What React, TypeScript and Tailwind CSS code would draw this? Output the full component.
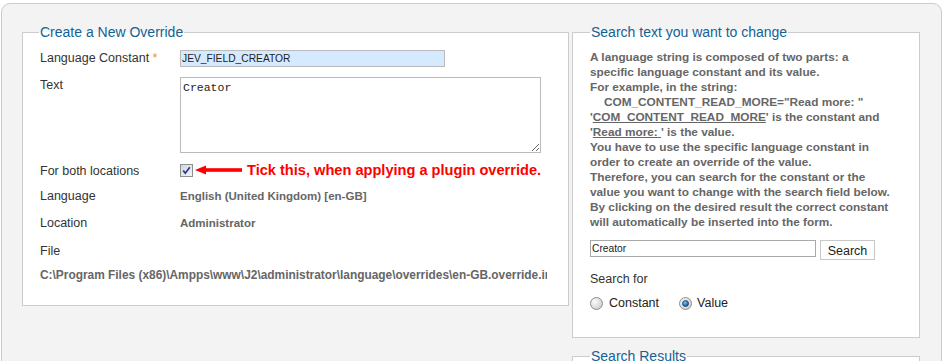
import React from "react";

const CheckBox = () => (
  <svg width="13" height="13" viewBox="0 0 13 13">
    <defs>
      <linearGradient id="cbg" x1="0" y1="0" x2="1" y2="1">
        <stop offset="0" stopColor="#d4d4dc" />
        <stop offset="1" stopColor="#f4f4f8" />
      </linearGradient>
    </defs>
    <rect x="0.5" y="0.5" width="12" height="12" fill="url(#cbg)" stroke="#8e8f8f" />
    <path d="M3.2 6.4 L5.3 9.2 L9.8 3.2" stroke="#22379a" strokeWidth="1.7" fill="none" />
  </svg>
);

const Arrow = () => (
  <svg width="47" height="10" viewBox="0 0 47 10">
    <polygon points="0,5 11,0.5 11,9.5" fill="#f00" />
    <rect x="10" y="3.2" width="37" height="3.6" fill="#f00" />
  </svg>
);

const Radio = ({ checked }: { checked?: boolean }) => (
  <svg width="13" height="13" viewBox="0 0 13 13">
    <defs>
      <radialGradient id="rbg" cx="0.35" cy="0.35" r="0.7">
        <stop offset="0" stopColor="#fbfbfb" />
        <stop offset="1" stopColor="#cfcfcf" />
      </radialGradient>
      <radialGradient id="rdot" cx="0.4" cy="0.35" r="0.7">
        <stop offset="0" stopColor="#7fc2f0" />
        <stop offset="1" stopColor="#0b4f8e" />
      </radialGradient>
    </defs>
    <circle cx="6.5" cy="6.5" r="6" fill="url(#rbg)" stroke="#8f8f8f" />
    {checked && <circle cx="6.5" cy="6.5" r="3" fill="url(#rdot)" stroke="#1d3f63" strokeWidth="0.8" />}
  </svg>
);

const rows = [
  { label: "Language", value: "English (United Kingdom) [en-GB]", mt: "mt-[9px]" },
  { label: "Location", value: "Administrator", mt: "mt-[11px]" },
];

const help = [
  "A language string is composed of two parts: a",
  "specific language constant and its value.",
  "For example, in the string:",
];

export default function App() {
  return (
    <div className="h-[361px] w-[942px] overflow-hidden bg-white pt-[3px] pl-[1px] font-['Liberation_Sans',Arial,sans-serif]">
      <div className="h-[420px] w-[941px] rounded-t-[9px] border border-[#ccc] bg-[#f3f3f3] pt-[20px] pl-[20px]">
        <div className="flex items-start gap-[3px]">
          {/* left: create override */}
          <fieldset className="w-[547px] min-w-0 shrink-0 border border-[#ccc] bg-white">
            <legend className="ml-[16px] px-[1px] text-[14px] leading-[16px] text-[#146295]">
              Create a New Override
            </legend>
            <div className="pl-[17px] pr-[21px] pb-[22px] text-[12.5px] leading-[15px] text-[#333]">
              <div className="mt-[10px] flex h-[17px] items-center">
                <div className="w-[140px] shrink-0">
                  Language Constant <span className="text-[#f0901e]">*</span>
                </div>
                <input
                  readOnly
                  defaultValue="JEV_FIELD_CREATOR"
                  className="h-[17px] w-[265px] border border-[#bbb] bg-[#d5eaff] px-[1px] text-[10.25px] text-[#222] outline-none"
                />
              </div>
              <div className="mt-[10px] flex items-start">
                <div className="w-[140px] shrink-0 pt-[1px]">Text</div>
                <textarea
                  readOnly
                  defaultValue="Creator"
                  className="h-[76px] w-[361px] border border-[#bbb] bg-white px-[2px] pt-[3px] font-['Liberation_Mono','Courier_New',monospace] text-[11.5px] leading-[14px] text-[#222] outline-none"
                />
              </div>
              <div className="mt-[9px] flex h-[16px] items-center">
                <div className="w-[140px] shrink-0 pt-[2px]">For both locations</div>
                <CheckBox />
                <span className="ml-[2px] flex items-center">
                  <Arrow />
                </span>
                <span className="ml-[5px] whitespace-nowrap text-[14.6px] font-bold text-[#f00]">
                  Tick this, when applying a plugin override.
                </span>
              </div>
              {rows.map((r) => (
                <div key={r.label} className={`${r.mt} flex h-[16px] items-center pt-[2px]`}>
                  <div className="w-[140px] shrink-0">{r.label}</div>
                  <div className="text-[11.5px] font-bold text-[#666]">{r.value}</div>
                </div>
              ))}
              <div className="mt-[11px] flex h-[16px] items-center pt-[4px]">File</div>
              <div className="mt-[10px] h-[16px] w-[507px] overflow-hidden whitespace-nowrap pt-[1px] text-[11.9px] font-bold leading-[15px] text-[#666]">
                C:\Program Files (x86)\Ampps\www\J2\administrator\language\overrides\en-GB.override.ini
              </div>
            </div>
          </fieldset>

          {/* right: search */}
          <div className="flex w-[348px] shrink-0 flex-col">
            <fieldset className="min-w-0 border border-[#ccc] bg-white">
              <legend className="ml-[17px] px-[1px] text-[14px] leading-[16px] text-[#146295]">
                Search text you want to change
              </legend>
              <div className="pt-[10px] pl-[17px] pb-[26px]">
                <div className="whitespace-nowrap text-[11.8px] font-bold leading-[15px] text-[#666]">
                  {help.map((l) => (
                    <div key={l}>{l}</div>
                  ))}
                  <div className="pl-[14px]">COM_CONTENT_READ_MORE="Read more: "</div>
                  <div>
                    '<span className="underline">COM_CONTENT_READ_MORE</span>' is the constant and
                  </div>
                  <div>
                    '<span className="underline">Read more: </span>' is the value.
                  </div>
                  <div>You have to use the specific language constant in</div>
                  <div>order to create an override of the value.</div>
                  <div>Therefore, you can search for the constant or the</div>
                  <div>value you want to change with the search field below.</div>
                  <div>By clicking on the desired result the correct constant</div>
                  <div>will automatically be inserted into the form.</div>
                </div>
                <div className="mt-[10px] flex items-start gap-[4px]">
                  <input
                    readOnly
                    defaultValue="Creator"
                    className="h-[17px] w-[226px] border border-[#aaa] bg-white px-[1px] text-[10.25px] text-[#222] outline-none"
                  />
                  <button className="h-[20px] w-[55px] border border-[#c8c8c8] bg-white pt-[1px] text-[12.5px] text-[#222]">
                    Search
                  </button>
                </div>
                <div className="mt-[12px] text-[12.5px] leading-[15px] text-[#333]">Search for</div>
                <div className="mt-[9px] flex h-[15px] items-center text-[12.5px] text-[#222]">
                  <Radio />
                  <span className="ml-[6px]">Constant</span>
                  <span className="ml-[20px] flex">
                    <Radio checked />
                  </span>
                  <span className="ml-[5px]">Value</span>
                </div>
              </div>
            </fieldset>
            <fieldset className="mt-[10px] h-[120px] min-w-0 border border-[#ccc] bg-white">
              <legend className="ml-[17px] px-[1px] text-[14px] leading-[16px] text-[#146295]">
                Search Results
              </legend>
            </fieldset>
          </div>
        </div>
      </div>
    </div>
  );
}
